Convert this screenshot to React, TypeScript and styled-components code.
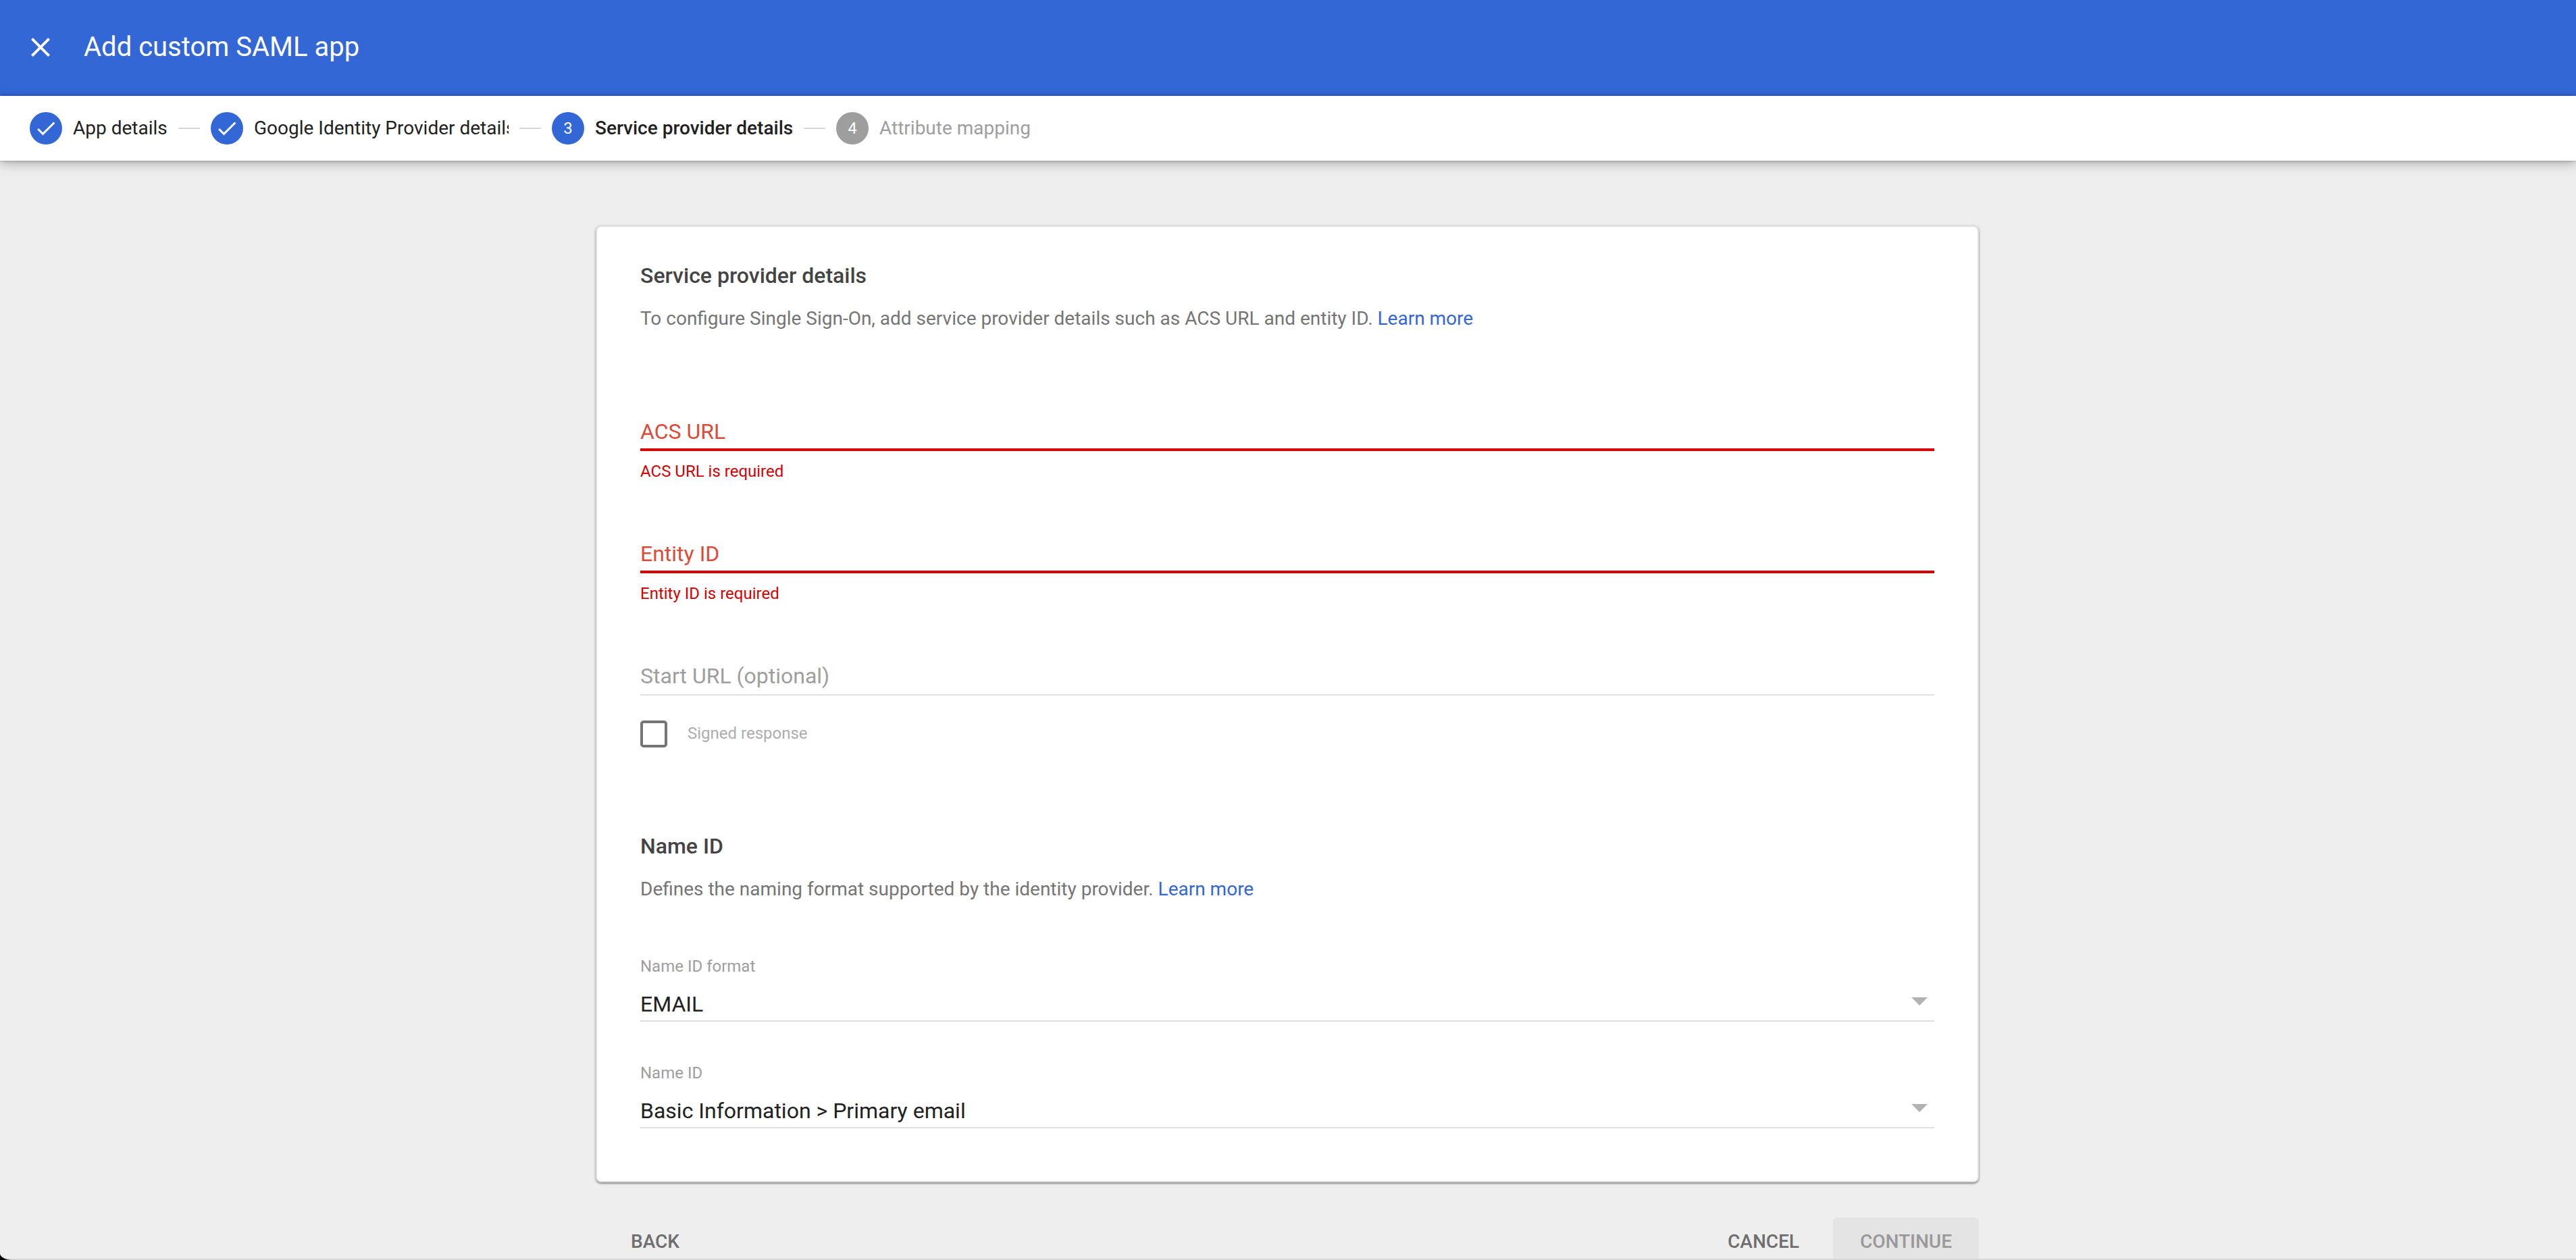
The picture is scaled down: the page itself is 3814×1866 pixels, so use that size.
import styled, { createGlobalStyle, css } from "styled-components";

const steps = [
  { label: "App details", status: "done", width: 140 },
  { label: "Google Identity Provider details", status: "done", width: 377 },
  { label: "Service provider details", status: "active", width: 293 },
  { label: "Attribute mapping", status: "todo", width: 226 },
];

const App = () => {
  return (
    <Screen>
      <GlobalStyle />
      <Window>
        <Header>
          <CloseButton aria-label="Close">
            <svg width="28" height="28" viewBox="0 0 28 28">
              <path
                d="M1.4 1.4L26.6 26.6M26.6 1.4L1.4 26.6"
                stroke="#fff"
                strokeWidth="4"
              />
            </svg>
          </CloseButton>
          <HeaderTitle>Add custom SAML app</HeaderTitle>
        </Header>
        <Stepper>
          {steps.map((item: any, index: number) => (
            <Step key={`step${index}`}>
              {index > 0 && <StepLine />}
              <StepCircle status={item.status}>
                {item.status === "done" ? <CheckIcon /> : index + 1}
              </StepCircle>
              <StepLabel status={item.status} width={item.width}>
                {item.label}
              </StepLabel>
            </Step>
          ))}
        </Stepper>

        <Content>
          <Card>
            <SectionTitle>Service provider details</SectionTitle>
            <SectionText>
              To configure Single Sign-On, add service provider details such as
              ACS URL and entity ID. <a href="#learn">Learn more</a>
            </SectionText>
            <Fields>
              <TextField label="ACS URL" error="ACS URL is required" />
              <TextField label="Entity ID" error="Entity ID is required" />
              <TextField label="Start URL (optional)" />
            </Fields>
            <CheckRow>
              <CheckBox />
              <span>Signed response</span>
            </CheckRow>

            <SectionTitle>Name ID</SectionTitle>
            <SectionText>
              Defines the naming format supported by the identity provider.{" "}
              <a href="#learn">Learn more</a>
            </SectionText>
            <Selects>
              <SelectField label="Name ID format" value="EMAIL" />
              <SelectField
                label="Name ID"
                value="Basic Information > Primary email"
              />
            </Selects>
          </Card>
          <Footer>
            <FooterButton>BACK</FooterButton>
            <FooterRight>
              <FooterButton>CANCEL</FooterButton>
              <ContinueButton disabled>CONTINUE</ContinueButton>
            </FooterRight>
          </Footer>
        </Content>
      </Window>
    </Screen>
  );
};
export default App;

const CheckIcon = () => (
  <svg width="36" height="36" viewBox="0 0 24 24">
    <path
      d="M9 16.17L4.83 12l-1.42 1.41L9 19 21 7l-1.41-1.41z"
      fill="#fff"
    />
  </svg>
);

const TextField = ({ label, error }: any) => (
  <Field>
    <FieldInput error={error}>{label}</FieldInput>
    {error && <FieldError>{error}</FieldError>}
  </Field>
);

const SelectField = ({ label, value }: any) => (
  <SelectBox>
    <SelectLabel>{label}</SelectLabel>
    <SelectValue>
      <span>{value}</span>
      <svg width="24" height="12" viewBox="0 0 24 12">
        <path d="M0 0H24L12 12Z" fill="#b2b2b2" />
      </svg>
    </SelectValue>
  </SelectBox>
);

const GlobalStyle = createGlobalStyle`
  * {
    box-sizing: border-box;
  }
  body {
    margin: 0;
    font-family: Roboto, "Liberation Sans", sans-serif;
    overflow: hidden;
  }
  h1, h2, p {
    margin: 0;
  }
  button {
    font-family: inherit;
    border: none;
    padding: 0;
    background: none;
  }
`;
const Screen = styled.div`
  height: 1866px;
  background: #000;
`;
const Window = styled.div`
  display: flex;
  flex-direction: column;
  height: 100%;
  overflow: hidden;
  background: #eee;
  border-bottom: 2px solid #d8d8d8;
  border-bottom-left-radius: 17px 10px;
`;
const Header = styled.header`
  display: flex;
  align-items: center;
  flex-shrink: 0;
  gap: 50px;
  height: 142px;
  padding: 0 46px 2px;
  background: #3367d6;
`;
const CloseButton = styled.button`
  display: flex;
`;
const HeaderTitle = styled.h1`
  color: #fff;
  font-size: 40px;
  font-weight: 400;
  line-height: 48px;
`;
const Stepper = styled.nav`
  display: flex;
  align-items: center;
  flex-shrink: 0;
  gap: 16px;
  height: 96px;
  padding: 0 44px;
  background: #fff;
  box-shadow: 0 0 4px rgba(0, 0, 0, 0.3), 0 4px 16px rgba(0, 0, 0, 0.28);
`;
const Step = styled.div`
  display: flex;
  align-items: center;
  gap: 16px;
`;
const StepLine = styled.div`
  width: 32px;
  height: 2px;
  background: #d6d6d6;
`;
const StepCircle = styled.div<{ status?: any }>`
  display: flex;
  align-items: center;
  justify-content: center;
  width: 48px;
  height: 48px;
  border-radius: 50%;
  color: #fff;
  font-size: 24px;
  background: ${({ status }) => (status === "todo" ? "#9e9e9e" : "#3367d6")};
`;
const StepLabel = styled.span<{ status?: any; width?: any }>`
  width: ${({ width }) => width}px;
  overflow: hidden;
  white-space: nowrap;
  color: ${({ status }) => (status === "todo" ? "#9e9e9e" : "#212121")};
  font-size: 28px;
  font-weight: ${({ status }) => (status === "active" ? "500" : "400")};
  line-height: 40px;
`;
const Content = styled.main`
  width: 2048px;
  margin: 96px 0 0 882px;
`;
const Card = styled.section`
  height: 1417px;
  padding: 50px 64px 0;
  border: 2px solid #e0e0e3;
  border-radius: 8px;
  background: #fff;
  box-shadow: 0 2px 3px rgba(0, 0, 0, 0.4), 0 0 4px rgba(0, 0, 0, 0.1);
`;
const SectionTitle = styled.h2`
  color: #444;
  font-size: 32px;
  font-weight: 500;
  line-height: 44px;
`;
const SectionText = styled.p`
  margin-top: 22px;
  color: #757575;
  font-size: 28px;
  line-height: 40px;
  a {
    color: #3367d6;
    text-decoration: none;
  }
`;
const Fields = styled.div`
  padding-top: 122px;
`;
const Field = styled.div`
  height: 181px;
  &:last-child {
    height: 62px;
  }
`;
const FieldInput = styled.div<{ error?: any }>`
  height: 54px;
  color: #9e9e9e;
  font-size: 32px;
  line-height: 50px;
  border-bottom: 2px solid #e0e0e0;
  ${({ error }) =>
    error &&
    css`
      color: #dd4b39;
      border-bottom: 4px solid #d90000;
    `}
`;
const FieldError = styled.p`
  padding-top: 16px;
  color: #d50000;
  font-size: 24px;
  line-height: 28px;
`;
const CheckRow = styled.div`
  display: flex;
  align-items: center;
  gap: 30px;
  height: 40px;
  margin: 29px 0 124px;
  color: #adadad;
  font-size: 24px;
  span {
    padding-bottom: 2px;
  }
`;
const CheckBox = styled.div`
  width: 40px;
  height: 40px;
  border: 4px solid #757575;
  border-radius: 5px;
`;
const Selects = styled.div`
  padding-top: 80px;
`;
const SelectBox = styled.div`
  height: 158px;
`;
const SelectLabel = styled.p`
  color: #9e9e9e;
  font-size: 24px;
  line-height: 28px;
`;
const SelectValue = styled.div`
  display: flex;
  align-items: center;
  justify-content: space-between;
  height: 54px;
  margin-top: 14px;
  padding-right: 10px;
  color: #212121;
  font-size: 32px;
  line-height: 40px;
  border-bottom: 2px solid #e0e0e0;
  span {
    padding-top: 4px;
  }
  svg {
    margin-bottom: 4px;
  }
`;
const Footer = styled.footer`
  display: flex;
  justify-content: space-between;
  margin-top: 52px;
  padding-left: 52px;
`;
const FooterRight = styled.div`
  display: flex;
  gap: 50px;
`;
const FooterButton = styled.button`
  height: 72px;
  padding-bottom: 2px;
  color: #6e6e6e;
  font-size: 28px;
  font-weight: 500;
`;
const ContinueButton = styled(FooterButton)`
  width: 216px;
  color: #999;
  background: #e4e4e4;
  border-radius: 6px;
`;
